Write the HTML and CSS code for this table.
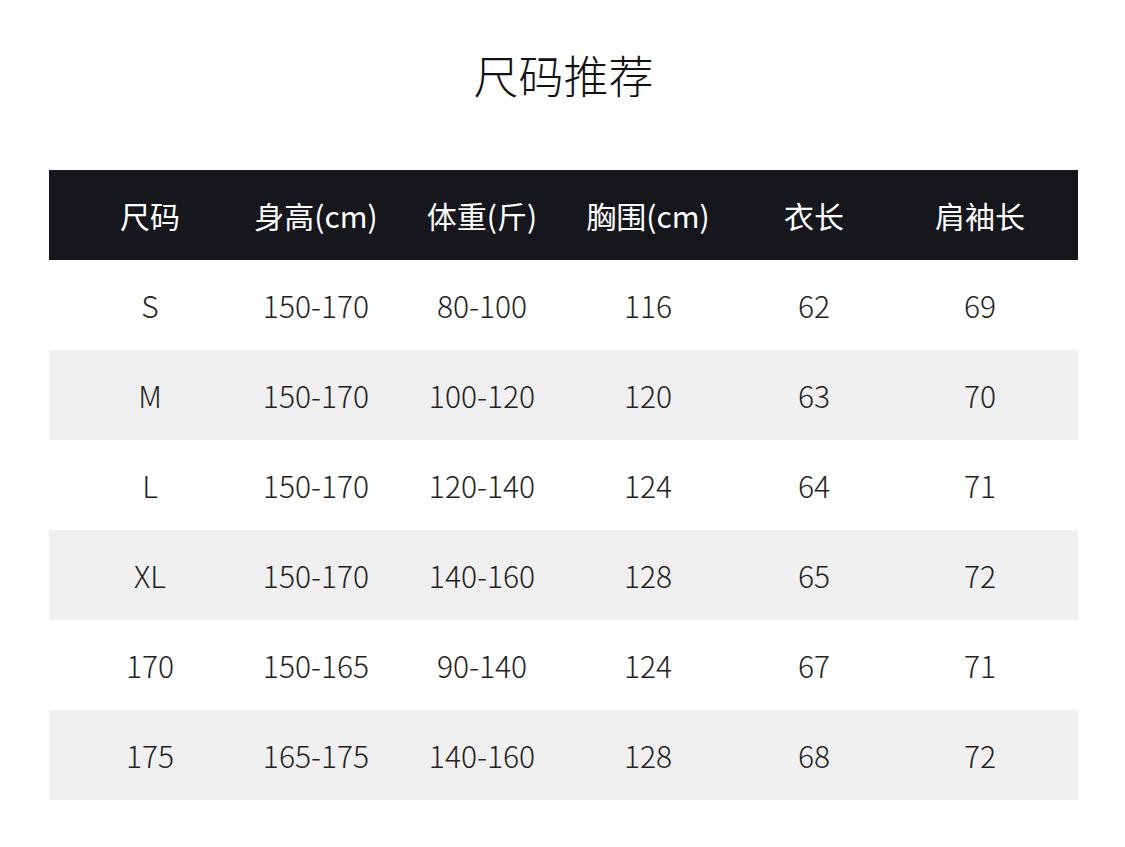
FILE: index.html
```html
<!DOCTYPE html>
<html lang="zh-CN">
<head>
<meta charset="utf-8">
<title>尺码推荐</title>
<link rel="stylesheet" href="styles.css">
</head>
<body>
<main class="page">
  <h1 class="title">尺码推荐</h1>
  <div class="table">
    <div class="row head">
      <div class="cell">尺码</div>
      <div class="cell">身高(cm)</div>
      <div class="cell">体重(斤)</div>
      <div class="cell">胸围(cm)</div>
      <div class="cell">衣长</div>
      <div class="cell">肩袖长</div>
    </div>
    <div class="row">
      <div class="cell">S</div><div class="cell">150-170</div><div class="cell">80-100</div><div class="cell">116</div><div class="cell">62</div><div class="cell">69</div>
    </div>
    <div class="row alt">
      <div class="cell">M</div><div class="cell">150-170</div><div class="cell">100-120</div><div class="cell">120</div><div class="cell">63</div><div class="cell">70</div>
    </div>
    <div class="row">
      <div class="cell">L</div><div class="cell">150-170</div><div class="cell">120-140</div><div class="cell">124</div><div class="cell">64</div><div class="cell">71</div>
    </div>
    <div class="row alt">
      <div class="cell">XL</div><div class="cell">150-170</div><div class="cell">140-160</div><div class="cell">128</div><div class="cell">65</div><div class="cell">72</div>
    </div>
    <div class="row">
      <div class="cell">170</div><div class="cell">150-165</div><div class="cell">90-140</div><div class="cell">124</div><div class="cell">67</div><div class="cell">71</div>
    </div>
    <div class="row alt">
      <div class="cell">175</div><div class="cell">165-175</div><div class="cell">140-160</div><div class="cell">128</div><div class="cell">68</div><div class="cell">72</div>
    </div>
  </div>
</main>
</body>
</html>
```
FILE: styles.css
```css
html, body {
  margin: 0;
  padding: 0;
  background: #ffffff;
}

body {
  font-family: "Noto Sans CJK SC", "Noto Sans", sans-serif;
  color: #222222;
}

.page {
  padding: 45px 47px 0 49px;
}

.title {
  margin: 0 0 65px 0;
  height: 60px;
  line-height: 60px;
  font-size: 45px;
  font-weight: 300;
  text-align: center;
  color: #111111;
}

.table {
  display: flex;
  flex-direction: column;
}

.row {
  display: grid;
  grid-template-columns: repeat(6, 166px);
  padding: 0 15px 0 18px;
  height: 90px;
  align-items: center;
  background: #ffffff;
}

.row.alt {
  background: #f0f0f0;
}

.row.head {
  background: #16161d;
  color: #ffffff;
}

.row.head .cell {
  font-weight: 400;
}

.cell {
  text-align: center;
  font-size: 30px;
  font-weight: 300;
  line-height: 40px;
  white-space: nowrap;
}
```
